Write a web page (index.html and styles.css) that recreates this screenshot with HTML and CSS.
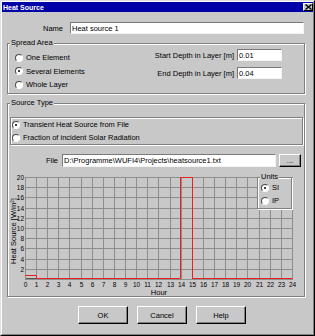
FILE: index.html
```html
<!DOCTYPE html>
<html lang="en">
<head>
    <meta charset="UTF-8">
    <meta name="viewport" content="width=device-width, initial-scale=1.0">
    <title>Heat Source</title>

    <link rel="stylesheet" href="styles.css">
</head>
<body>
<div class="window">
  <div class="frame">
    <div class="titlebar">
        <span class="title">Heat Source</span>
        <span class="close"><svg width="7" height="6" viewBox="0 0 7 6"><path d="M0.5 0.5L6.5 5.5M6.5 0.5L0.5 5.5" stroke="#000" stroke-width="1.4"/></svg></span>
    </div>

    <div class="content">
        <div class="name-row">
            <label class="name-lbl">Name</label>
            <input class="field name-field" type="text" value="Heat source 1">
        </div>

        <fieldset class="group spread">
            <legend>Spread Area</legend>
            <div class="radios">
                <div class="opt"><span class="radio"></span>One Element</div>
                <div class="opt"><span class="radio on"></span>Several Elements</div>
                <div class="opt"><span class="radio"></span>Whole Layer</div>
            </div>
            <div class="depths">
                <div class="depth-row"><span>Start Depth in Layer [m]</span><input class="field depth" type="text" value="0.01"></div>
                <div class="depth-row"><span>End Depth in Layer [m]</span><input class="field depth" type="text" value="0.04"></div>
            </div>
        </fieldset>

        <fieldset class="group source">
            <legend>Source Type</legend>
            <div class="type-box">
                <div class="opt"><span class="radio on"></span>Transient Heat Source from File</div>
                <div class="opt"><span class="radio"></span>Fraction of incident Solar Radiation</div>
            </div>
            <div class="file-row">
                <label class="file-lbl">File</label>
                <input class="field file-field" type="text" value="D:\Programme\WUFI4\Projects\heatsource1.txt">
                <div class="btn browse">...</div>
            </div>

            <div class="chart">
                <svg class="plot" width="296" height="126" viewBox="8 170 296 126">
                    <path class="grid" d="M25.5 177V280M36.5 177V280M47.5 177V280M58.5 177V280M69.5 177V280M81.5 177V280M92.5 177V280M103.5 177V280M114.5 177V280M125.5 177V280M136.5 177V280M147.5 177V280M158.5 177V280M170.5 177V280M181.5 177V280M192.5 177V280M203.5 177V280M214.5 177V280M225.5 177V280M236.5 177V280M247.5 177V280M259.5 177V280M270.5 177V280M281.5 177V280M292.5 177V280"/>
                    <path class="grid" d="M25 177.5H293M25 187.5H293M25 197.5H293M25 208.5H293M25 218.5H293M25 228.5H293M25 238.5H293M25 248.5H293M25 259.5H293M25 269.5H293M25 279.5H293"/>
                    <path class="base" d="M26 278.5H36"/>
                    <path class="series" d="M25 275.5H36.5V278.5H180.5V177.5H192.5V278.5H292.5"/>

                    <g class="ylab">
                        <text x="24" y="179.5">20</text>
                        <text x="24" y="189.5">18</text>
                        <text x="24" y="199.5">16</text>
                        <text x="24" y="210.5">14</text>
                        <text x="24" y="220.5">12</text>
                        <text x="24" y="230.5">10</text>
                        <text x="24" y="240.5">8</text>
                        <text x="24" y="250.5">6</text>
                        <text x="24" y="261.5">4</text>
                        <text x="24" y="271.5">2</text>
                    </g>
                    <g class="xlab">
                        <text x="25.5" y="286.5">0</text>
                        <text x="36.5" y="286.5">1</text>
                        <text x="47.5" y="286.5">2</text>
                        <text x="58.5" y="286.5">3</text>
                        <text x="69.5" y="286.5">4</text>
                        <text x="81.5" y="286.5">5</text>
                        <text x="92.5" y="286.5">6</text>
                        <text x="103.5" y="286.5">7</text>
                        <text x="114.5" y="286.5">8</text>
                        <text x="125.5" y="286.5">9</text>
                        <text x="136.5" y="286.5">10</text>
                        <text x="147.5" y="286.5">11</text>
                        <text x="158.5" y="286.5">12</text>
                        <text x="170.5" y="286.5">13</text>
                        <text x="181.5" y="286.5">14</text>
                        <text x="192.5" y="286.5">15</text>
                        <text x="203.5" y="286.5">16</text>
                        <text x="214.5" y="286.5">17</text>
                        <text x="225.5" y="286.5">18</text>
                        <text x="236.5" y="286.5">19</text>
                        <text x="247.5" y="286.5">20</text>
                        <text x="259.5" y="286.5">21</text>
                        <text x="270.5" y="286.5">22</text>
                        <text x="281.5" y="286.5">23</text>
                        <text x="292.5" y="286.5">24</text>
                    </g>
                    <text class="axis-title" x="159" y="295">Hour</text>
                    <text class="axis-title" transform="translate(15.5 231) rotate(-90)">Heat Source [W/m²]</text>
                </svg>

                <fieldset class="group units">
                    <legend>Units</legend>
                    <div class="opt"><span class="radio on"></span>SI</div>
                    <div class="opt"><span class="radio"></span>IP</div>
                </fieldset>
            </div>
        </fieldset>

        <div class="buttons">
            <div class="btn">OK</div>
            <div class="btn">Cancel</div>
            <div class="btn">Help</div>
        </div>
    </div>
  </div>
</div>
</body>
</html>
```

FILE: styles.css
```css
* {
    box-sizing: border-box;
}

body {
    margin: 0;
    font-family: "Liberation Sans", Arial, sans-serif;
    font-size: 7.5px;
    color: #000;
}

.window {
    width: 315px;
    height: 336px;
    background-color: #c8c8c8;
    border: 1px solid;
    border-color: #dfdfdf #000 #000 #dfdfdf;
}

.frame {
    height: 100%;
    border: 1px solid;
    border-color: #fff #808080 #808080 #fff;
}

.titlebar {
    height: 10px;
    background-color: #0000a8;
    color: #fff;
    display: flex;
    align-items: center;
    justify-content: space-between;
    padding: 0 0 0 1px;
}

.title {
    font-weight: bold;
    font-size: 7px;
}

.close {
    width: 10px;
    height: 8px;
    background-color: #c8c8c8;
    border: 1px solid;
    border-color: #fff #000 #000 #fff;
    display: flex;
    align-items: center;
    justify-content: center;
}

.close svg {
    display: block;
}

.content {
    padding: 10px 8px 0 5px;
}

/* inputs */
.field {
    display: block;
    height: 12px;
    margin: 0;
    padding: 0 1px;
    font: inherit;
    color: #000;
    background-color: #fff;
    border: 1px solid;
    border-color: #7a7a7a #f4f4f4 #f4f4f4 #7a7a7a;
    outline: none;
}

.name-row {
    display: flex;
    align-items: center;
    height: 12px;
}

.name-lbl {
    width: 56px;
    text-align: right;
    margin-right: 7px;
}

.name-field {
    width: 234px;
}

/* group boxes */
.group {
    margin: 0;
    padding: 0;
    min-width: 0;
    border: 1px solid #808080;
    box-shadow: 1px 1px 0 #fff, inset 1px 1px 0 #fff;
}

.group legend {
    margin-left: 2px;
    padding: 0 1px;
    line-height: 8px;
    height: 8px;
    background-color: #c8c8c8;
}

.spread {
    margin-top: 5px;
    width: 298px;
    display: flex;
    justify-content: space-between;
    padding-bottom: 1.5px;
}

.radios {
    margin-top: 4px;
    padding-left: 7px;
}

.opt {
    height: 13.5px;
    display: flex;
    align-items: center;
    white-space: nowrap;
}

.radio {
    width: 8px;
    height: 8px;
    margin-right: 3px;
    border-radius: 50%;
    background-color: #fff;
    border: 1px solid;
    border-color: #4a4a4a #fff #fff #4a4a4a;
    display: flex;
    align-items: center;
    justify-content: center;
}

.radio.on::after {
    content: "";
    width: 2px;
    height: 2px;
    border-radius: 50%;
    background-color: #000;
}

.depths {
    margin-top: 2px;
    margin-right: 22px;
}

.depth-row {
    height: 12px;
    display: flex;
    align-items: center;
    justify-content: flex-end;
    gap: 3px;
}

.depth-row + .depth-row {
    margin-top: 6px;
}

.depth {
    width: 45px;
}

.source {
    margin-top: 5px;
    width: 298px;
}

.type-box {
    margin: 10px 1px 0 2px;
    height: 28px;
    padding-left: 1px;
    border: 1px solid #808080;
    box-shadow: 1px 1px 0 #fff, inset 1px 1px 0 #fff;
}

.type-box .opt {
    height: 13px;
}

.file-row {
    margin-top: 9px;
    height: 13px;
    display: flex;
    align-items: center;
}

.file-lbl {
    width: 50px;
    text-align: right;
    margin-right: 4px;
}

.file-field {
    width: 214px;
    height: 13px;
    margin-right: 3px;
}

.btn {
    display: flex;
    align-items: center;
    justify-content: center;
    background-color: #c8c8c8;
    border: 1px solid;
    border-color: #fff #000 #000 #fff;
    box-shadow: inset -1px -1px 0 #808080;
}

.browse {
    width: 22px;
    height: 13px;
}

/* chart */
.chart {
    position: relative;
    margin-top: 3px;
    height: 126px;
}

.plot {
    display: block;
}

.grid {
    stroke: #8e8e8e;
    stroke-width: 1;
    fill: none;
}

.base {
    stroke: #555;
    stroke-width: 1;
}

.series {
    stroke: #e82020;
    stroke-width: 1;
    fill: none;
}

.ylab text {
    font-size: 6.5px;
    text-anchor: end;
}

.xlab text {
    font-size: 6.5px;
    text-anchor: middle;
}

.axis-title {
    font-size: 7.5px;
    text-anchor: middle;
}

.units {
    position: absolute;
    left: 249px;
    top: 3px;
    width: 35px;
    height: 36px;
    background-color: #c8c8c8;
}

.units .opt {
    height: 13px;
    padding-left: 3px;
}

.buttons {
    display: flex;
    gap: 9px;
    margin-top: 9px;
    padding-left: 71px;
}

.buttons .btn {
    width: 50px;
    height: 18px;
}
```
